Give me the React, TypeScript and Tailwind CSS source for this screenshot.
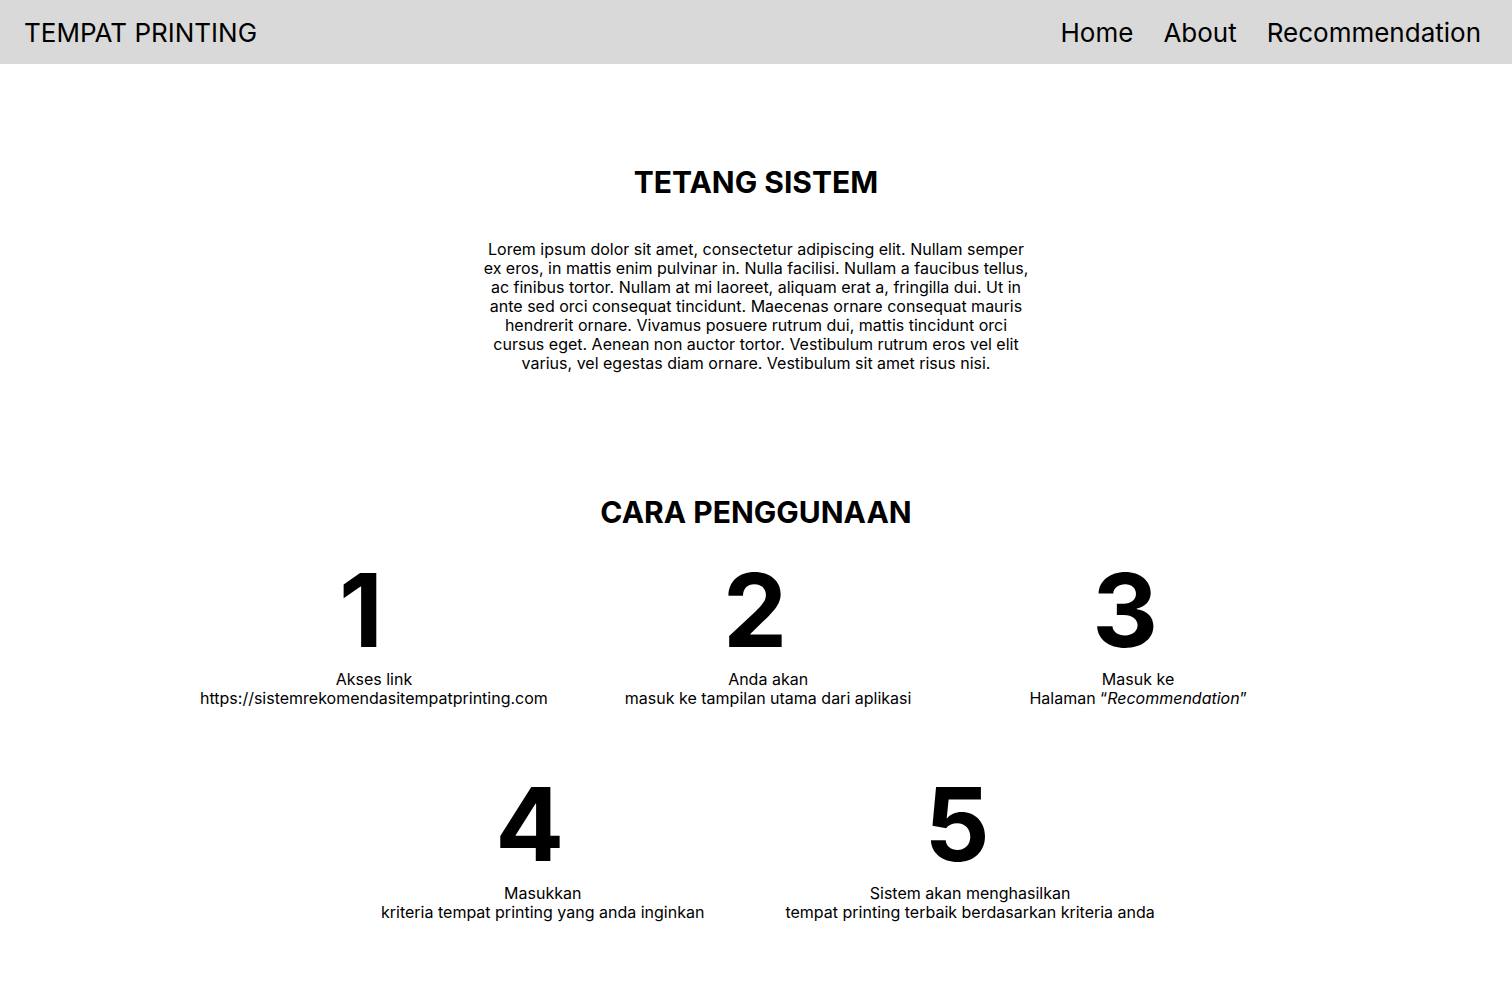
import React from "react";

const font = { fontFamily: "Inter, 'Noto Sans', sans-serif" };

function Step({ n, children, className = "" }: { n: string; children: React.ReactNode; className?: string }) {
  return (
    <div className={"flex flex-col items-center " + className}>
      <div className="text-[102px] font-bold leading-[76px] h-[76px] text-black pr-[26px]">{n}</div>
      <div className="mt-[22px] text-center text-[16px] leading-[19px] text-black">{children}</div>
    </div>
  );
}

export default function App() {
  return (
    <div className="min-h-[982px] bg-white text-black" style={font}>
      <header className="h-16 bg-[#d9d9d9] flex items-center justify-between pl-[24px] pr-[31px] pt-[2px]">
        <div className="text-[26px] leading-none">TEMPAT PRINTING</div>
        <nav className="flex items-center gap-[30px] text-[26px] leading-none">
          <span>Home</span>
          <span>About</span>
          <span>Recommendation</span>
        </nav>
      </header>

      <section className="flex flex-col items-center pt-[100px]">
        <h1 className="text-[30px] font-bold leading-[36px]">TETANG SISTEM</h1>
        <p className="mt-[40px] w-[545px] text-center text-[16px] leading-[19px]">
          Lorem ipsum dolor sit amet, consectetur adipiscing elit. Nullam semper ex eros, in mattis enim pulvinar in. Nulla facilisi. Nullam a faucibus tellus, ac finibus tortor. Nullam at mi laoreet, aliquam erat a, fringilla dui. Ut in ante sed orci consequat tincidunt. Maecenas ornare consequat mauris hendrerit ornare. Vivamus posuere rutrum dui, mattis tincidunt orci cursus eget. Aenean non auctor tortor. Vestibulum rutrum eros vel elit varius, vel egestas diam ornare. Vestibulum sit amet risus nisi.
        </p>
      </section>

      <section className="flex flex-col items-center pt-[121px]">
        <h2 className="text-[30px] font-bold leading-[36px]">CARA PENGGUNAAN</h2>
      </section>

      <div className="flex pl-[200px] mt-[42px]">
        <Step n="1">
          Akses link
          <br />
          https://sistemrekomendasitempatprinting.com
        </Step>
        <Step n="2" className="ml-[77px]">
          Anda akan
          <br />
          masuk ke tampilan utama dari aplikasi
        </Step>
        <Step n="3" className="ml-[118px]">
          Masuk ke
          <br />
          Halaman “<em>Recommendation</em>”
        </Step>
      </div>

      <div className="flex pl-[381px] mt-[78px]">
        <Step n="4">
          Masukkan
          <br />
          kriteria tempat printing yang anda inginkan
        </Step>
        <Step n="5" className="ml-[81px]">
          Sistem akan menghasilkan
          <br />
          tempat printing terbaik berdasarkan kriteria anda
        </Step>
      </div>
    </div>
  );
}
